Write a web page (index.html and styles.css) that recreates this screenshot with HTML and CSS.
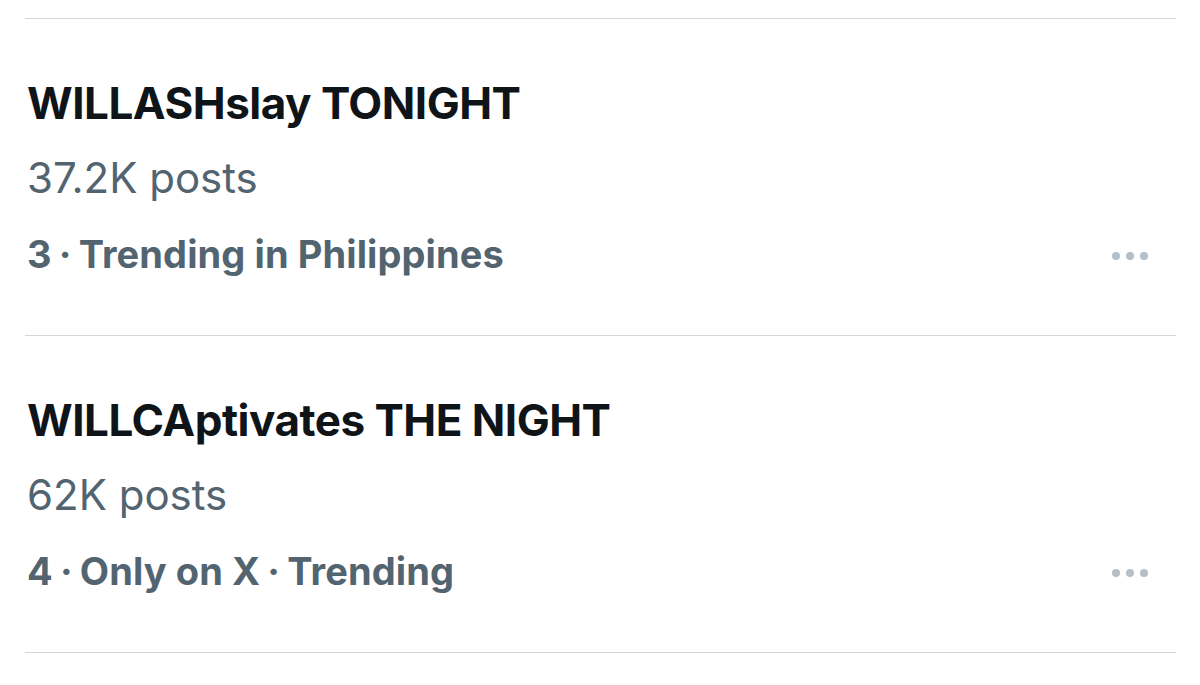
FILE: index.html
```html
<!DOCTYPE html>
<html lang="en">
<head>
<meta charset="utf-8">
<title>Trends</title>
<link rel="stylesheet" href="styles.css">
</head>
<body>
<div class="list">
  <div class="trend">
    <div class="title">WILLASHslay TONIGHT</div>
    <div class="count">37.2K posts</div>
    <div class="meta-row">
      <div class="meta">3 <span class="sep">·</span> Trending in Philippines</div>
      <div class="more" aria-label="More"><span></span><span></span><span></span></div>
    </div>
  </div>
  <div class="trend">
    <div class="title">WILLCAptivates THE NIGHT</div>
    <div class="count">62K posts</div>
    <div class="meta-row">
      <div class="meta">4 <span class="sep">·</span> Only on X <span class="sep">·</span> Trending</div>
      <div class="more" aria-label="More"><span></span><span></span><span></span></div>
    </div>
  </div>
</div>
</body>
</html>
```

FILE: styles.css
```css
html, body {
  margin: 0;
  padding: 0;
  background: #ffffff;
}
body {
  font-family: Inter, "Noto Sans", "Liberation Sans", sans-serif;
  width: 1200px;
  height: 685px;
  overflow: hidden;
}
.list {
  margin: 18px 24px 0 25px;
  border-top: 1px solid #d2d7db;
}
.trend {
  border-bottom: 1px solid #d2d7db;
  padding: 60px 0 57px 2px;
}
.title {
  font-size: 44px;
  line-height: 48px;
  font-weight: 700;
  color: #0f1419;
  letter-spacing: -0.5px;
}
.count {
  margin-top: 27px;
  font-size: 42px;
  line-height: 48px;
  font-weight: 400;
  color: #536471;
  letter-spacing: 0;
}
.meta-row {
  margin-top: 28px;
  display: flex;
  align-items: center;
  justify-content: space-between;
  height: 48px;
}
.meta {
  font-size: 38px;
  line-height: 48px;
  font-weight: 700;
  color: #536471;
  letter-spacing: 0.1px;
}
.sep {
  margin: 0 -2px;
}
.more {
  display: flex;
  gap: 6px;
  margin-right: 28px;
  margin-top: 3px;
}
.more span {
  width: 8px;
  height: 8px;
  border-radius: 50%;
  background: #b4bfc8;
}
```
